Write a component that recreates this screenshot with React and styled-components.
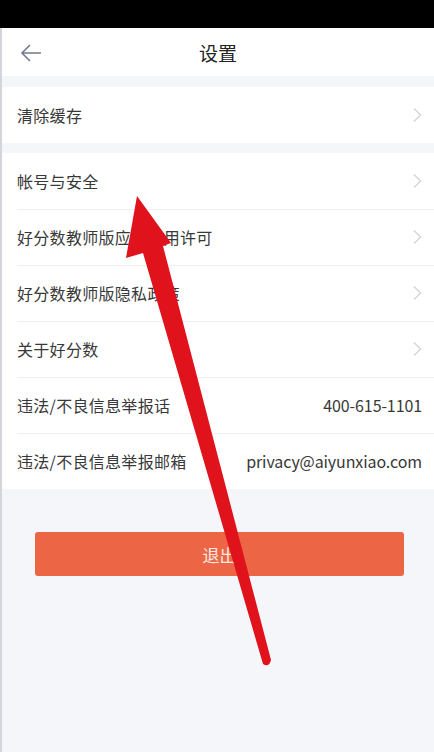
import React from 'react';
import styled, { createGlobalStyle } from 'styled-components';

const GlobalStyle = createGlobalStyle`
  html, body {
    margin: 0;
    padding: 0;
    background: #000;
  }
  body {
    font-family: "Noto Sans CJK SC", "Noto Sans", sans-serif;
  }
`

const Screen = styled.div`
  position: relative;
  width: 434px;
  height: 752px;
  overflow: hidden;
  background: #000;
  display: flex;
  flex-direction: column;
`

const StatusBar = styled.div`
  height: 28px;
  flex-shrink: 0;
  background: #000;
`

const Page = styled.div`
  flex: 1;
  background: #f5f6fa;
  border-left: 2px solid #d4d5da;
  display: flex;
  flex-direction: column;
`

const Header = styled.div`
  height: 48px;
  background: #fff;
  display: flex;
  align-items: center;
  justify-content: center;
  position: relative;
`

const BackButton = styled.div`
  position: absolute;
  left: 17px;
  top: 14px;
  width: 24px;
  height: 22px;
`

const Title = styled.h1`
  margin: 0;
  font-size: 19px;
  font-weight: 400;
  color: #222;
`

const Group = styled.div`
  background: #fff;
  margin-top: ${p => p.gap}px;
`

const Row = styled.div`
  height: 56px;
  display: flex;
  align-items: center;
  justify-content: space-between;
  padding-left: 15px;
  padding-right: 12px;
  position: relative;

  & + &::before {
    content: '';
    position: absolute;
    left: 15px;
    right: 0;
    top: 0;
    border-top: 1px solid #f0f0f3;
  }
`

const Label = styled.span`
  font-size: 16px;
  letter-spacing: 0.3px;
  color: #383838;
`

const Value = styled.span`
  font-size: 16px;
  letter-spacing: -0.1px;
  color: #383838;
`

const Chevron = () => (
  <svg width="10" height="16" viewBox="0 0 10 16">
    <path d="M2 1.5 L8.5 8 L2 14.5" fill="none" stroke="#d2d2d6" strokeWidth="1.3" />
  </svg>
)

const LogoutWrap = styled.div`
  padding: 43px 30px 0 33px;
`

const LogoutButton = styled.button`
  width: 100%;
  height: 44px;
  border: none;
  border-radius: 3px;
  background: #ec6645;
  color: #fdeae4;
  font-family: "Noto Sans CJK SC", sans-serif;
  font-size: 17px;
`

const Overlay = styled.svg`
  position: absolute;
  left: 0;
  top: 0;
  pointer-events: none;
`

const items = [
  { label: '帐号与安全', arrow: true },
  { label: '好分数教师版应用使用许可', arrow: true },
  { label: '好分数教师版隐私政策', arrow: true },
  { label: '关于好分数', arrow: true },
  { label: '违法/不良信息举报话', value: '400-615-1101' },
  { label: '违法/不良信息举报邮箱', value: 'privacy@aiyunxiao.com' },
]

export default function App() {
  return (
    <Screen>
      <GlobalStyle />
      <StatusBar />
      <Page>
        <Header>
          <BackButton>
            <svg width="24" height="22" viewBox="0 0 24 22">
              <path d="M3 11 H22 M11 3 L3 11 L11 19" fill="none" stroke="#707a8c" strokeWidth="1.6" />
            </svg>
          </BackButton>
          <Title>设置</Title>
        </Header>
        <Group gap={11}>
          <Row>
            <Label>清除缓存</Label>
            <Chevron />
          </Row>
        </Group>
        <Group gap={10}>
          {items.map(item => (
            <Row key={item.label}>
              <Label>{item.label}</Label>
              {item.arrow ? <Chevron /> : <Value>{item.value}</Value>}
            </Row>
          ))}
        </Group>
        <LogoutWrap>
          <LogoutButton>退出</LogoutButton>
        </LogoutWrap>
      </Page>
      <Overlay width="434" height="752" viewBox="0 0 434 752">
        <path
          d="M137 196 L171 243 L163 246 L271 660 Q269 668 263 664 L143 253 L126 258 Z"
          fill="#e0121c"
        />
      </Overlay>
    </Screen>
  );
}
